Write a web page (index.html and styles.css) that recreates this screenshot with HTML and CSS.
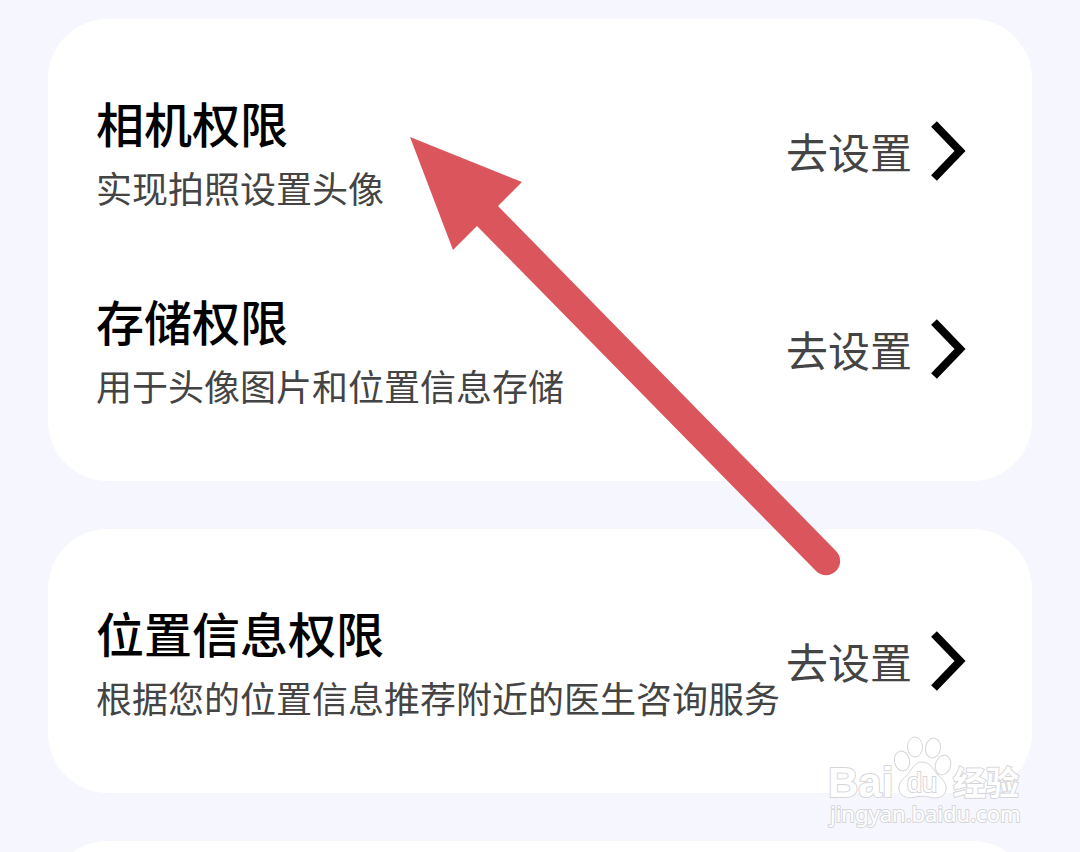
FILE: index.html
```html
<!DOCTYPE html>
<html lang="zh-CN">
<head>
  <meta charset="UTF-8">
  <meta name="viewport" content="width=device-width, initial-scale=1.0">
  <link rel="stylesheet" href="styles.css">
  <title>权限设置</title>
</head>
<body>
  <main class="page">
    <section class="card">
      <div class="row">
        <div class="info">
          <h2 class="title">相机权限</h2>
          <p class="desc">实现拍照设置头像</p>
        </div>
        <button class="action" type="button">去设置
          <svg class="chevron" viewBox="0 0 36 60"><path d="M4 3L30 30L4 57"/></svg>
        </button>
      </div>
      <div class="row">
        <div class="info">
          <h2 class="title">存储权限</h2>
          <p class="desc">用于头像图片和位置信息存储</p>
        </div>
        <button class="action" type="button">去设置
          <svg class="chevron" viewBox="0 0 36 60"><path d="M4 3L30 30L4 57"/></svg>
        </button>
      </div>
    </section>

    <section class="card">
      <div class="row">
        <div class="info">
          <h2 class="title">位置信息权限</h2>
          <p class="desc">根据您的位置信息推荐附近的医生咨询服务</p>
        </div>
        <button class="action" type="button">去设置
          <svg class="chevron" viewBox="0 0 36 60"><path d="M4 3L30 30L4 57"/></svg>
        </button>
      </div>
    </section>

    <section class="card next"></section>

    <!-- arrow pointing at the camera row -->
    <svg class="arrow" viewBox="0 0 432 440">
      <path d="M0 0L112 45L88 69L426 414A14 14 0 0 1 406 434L67 89L43 113Z"/>
    </svg>

    <!-- watermark -->
    <svg class="mark" viewBox="0 0 200 96">
      <text class="mark-bai" x="0" y="61">Bai</text>
      <ellipse cx="74" cy="25" rx="7.5" ry="10" transform="rotate(-12 74 25)"/>
      <ellipse cx="87" cy="11" rx="7.5" ry="10"/>
      <ellipse cx="105" cy="12" rx="7.5" ry="10" transform="rotate(10 105 12)"/>
      <ellipse cx="115" cy="29" rx="7.5" ry="10" transform="rotate(15 115 29)"/>
      <path d="M94 26C102 26 105 33 109 38C114 43 119 47 118 54C116 62 108 63 101 61C96 60 92 60 88 61C80 63 73 61 71 54C70 47 75 43 80 38C84 33 87 26 94 26Z"/>
      <text class="mark-du" x="79" y="56">du</text>
      <text class="mark-cn" x="125" y="59">经验</text>
      <text class="mark-url" x="2" y="86">jingyan.baidu.com</text>
    </svg>
  </main>
</body>
</html>
```
FILE: styles.css
```css
body {
  margin: 0;
  background-color: #f6f7fe;
  font-family: "Noto Sans CJK SC", sans-serif;
}

.page {
  position: relative;
  box-sizing: border-box;
  height: 100vh;
  padding: 19px 48px 0;
  overflow: hidden;
  display: flex;
  flex-direction: column;
  gap: 48px;
}

.card {
  flex-shrink: 0;
  padding: 33px 66px 33px 48px;
  background-color: #fff;
  border-radius: 60px;
}

.next {
  min-height: 200px;
}

.row {
  display: flex;
  align-items: center;
  justify-content: space-between;
  height: 198px;
}

.info {
  white-space: nowrap;
}

.title {
  margin: 0;
  font-size: 48px;
  line-height: 72px;
  font-weight: 500;
  color: #000;
}

.desc {
  margin: 0;
  font-size: 36px;
  line-height: 58px;
  color: #444;
}

.action {
  display: flex;
  align-items: center;
  gap: 18px;
  padding: 0;
  border: none;
  background: none;
  font-family: inherit;
  font-size: 42px;
  line-height: 60px;
  color: #444;
  white-space: nowrap;
  cursor: pointer;
}

.chevron {
  width: 36px;
  height: 60px;
  fill: none;
  stroke: #000;
  stroke-width: 8;
}

.arrow {
  position: absolute;
  left: 410px;
  top: 137px;
  width: 432px;
  height: 440px;
  fill: #db565c;
}

.mark {
  position: absolute;
  right: 52px;
  bottom: 20px;
  width: 200px;
  height: 96px;
  overflow: visible;
  fill: #fff;
  stroke: #d6d6da;
  stroke-width: 1;
}

.mark text {
  paint-order: stroke;
  stroke-width: 2;
}

.mark-bai {
  font: bold 42px "Liberation Sans", sans-serif;
}

.mark-du {
  font: 27px "Liberation Sans", sans-serif;
}

.mark-cn {
  font: bold 33px "Noto Sans CJK SC", sans-serif;
}

.mark-url {
  font: 22px "Noto Sans", sans-serif;
}
```
